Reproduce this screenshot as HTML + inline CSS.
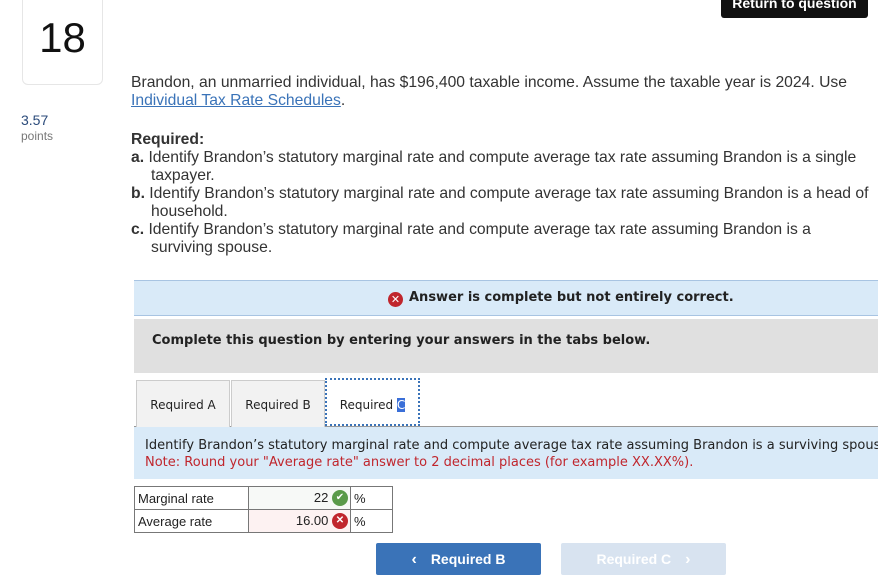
<!DOCTYPE html>
<html><head><meta charset="utf-8"><style>
body{margin:0;width:889px;height:579px;overflow:hidden;background:#fff;font-family:"Liberation Sans",sans-serif;color:#333;position:relative}
.a{position:absolute}
.v{font-family:"DejaVu Sans",Verdana,sans-serif}
td{vertical-align:middle;padding:0}
</style></head><body>
<div class="a" style="left:22px;top:-6px;width:79px;height:89px;border:1px solid #e6e6e6;border-radius:6px"></div>
<div class="a" style="left:22px;top:14px;width:81px;text-align:center;font-size:42px;color:#111">18</div>
<div class="a" style="left:721px;top:-8px;width:147px;height:26px;background:#111;border-radius:3px;color:#fff;font-weight:bold;font-size:14px;text-align:center;line-height:22px">Return to question</div>
<div class="a" style="left:21px;top:112px;font-size:14px;color:#2a4a7a">3.57</div>
<div class="a" style="left:21px;top:129px;font-size:12px;color:#777">points</div>
<div class="a" style="left:131px;top:74px;width:750px;font-size:15.7px;line-height:18px;color:#333">Brandon, an unmarried individual, has $196,400 taxable income. Assume the taxable year is 2024. Use<br><span style="color:#3a73b8;text-decoration:underline">Individual Tax Rate Schedules</span>.</div>
<div class="a" style="left:131px;top:131px;width:745px;font-size:15.7px;line-height:18px;color:#333">
<b>Required:</b><br>
<div style="padding-left:20px;text-indent:-20px"><b>a.</b> Identify Brandon’s statutory marginal rate and compute average tax rate assuming Brandon is a single taxpayer.</div>
<div style="padding-left:20px;text-indent:-20px"><b>b.</b> Identify Brandon’s statutory marginal rate and compute average tax rate assuming Brandon is a head of household.</div>
<div style="padding-left:20px;text-indent:-20px"><b>c.</b> Identify Brandon’s statutory marginal rate and compute average tax rate assuming Brandon is a surviving spouse.</div>
</div>
<div class="a" style="left:134px;top:280px;width:744px;height:34px;background:#d9eaf8;border-top:1px solid #a8c4e2;border-bottom:1px solid #a8c4e2"></div>
<div class="a v" style="left:388px;top:290px;font-size:13px;font-weight:bold;color:#222;white-space:nowrap"><span style="display:inline-block;width:15px;height:15px;border-radius:50%;background:#c0262d;color:#fff;font-size:11px;line-height:15px;text-align:center;vertical-align:-2px;margin-right:6px">✕</span>Answer is complete but not entirely correct.</div>
<div class="a" style="left:134px;top:319px;width:744px;height:54px;background:#e0e0e0"></div>
<div class="a v" style="left:152px;top:333px;font-size:13px;font-weight:bold;color:#222">Complete this question by entering your answers in the tabs below.</div>
<div class="a" style="left:134px;top:426px;width:744px;border-top:1px solid #999"></div>
<div class="a" style="left:136px;top:380px;width:92px;height:46px;background:#f2f2f2;border:1px solid #ccc;border-bottom:none;font-size:12px;color:#222;text-align:center;line-height:48px"><span class="v">Required A</span></div>
<div class="a" style="left:231px;top:380px;width:92px;height:46px;background:#f2f2f2;border:1px solid #ccc;border-bottom:none;font-size:12px;color:#222;text-align:center;line-height:48px"><span class="v">Required B</span></div>
<div class="a" style="left:325px;top:378px;width:95px;height:48px;background:#fff;border:2px dotted #3a73b8;font-size:12px;color:#222;text-align:center;line-height:50px;box-sizing:border-box"><span class="v">Required <span style="background:#3a6fd8;color:#fff">C</span></span></div>
<div class="a" style="left:134px;top:427px;width:744px;height:52px;background:#d9eaf8"></div>
<div class="a v" style="left:145px;top:437px;width:733px;overflow:hidden;white-space:nowrap;font-size:13px;line-height:17px;color:#222">Identify Brandon’s statutory marginal rate and compute average tax rate assuming Brandon is a surviving spouse.<br><span style="color:#c0262d">Note: Round your "Average rate" answer to 2 decimal places (for example XX.XX%).</span></div>
<table class="a" style="left:134px;top:486px;border-collapse:collapse;font-size:13px;color:#222;table-layout:fixed;width:258px">
<colgroup><col style="width:114px"><col style="width:102px"><col style="width:42px"></colgroup>
<tr style="height:23px"><td style="border:1px solid #777;padding-left:3px">Marginal rate</td><td style="border:1px solid #777;background:#f7f9f7;text-align:right;padding-right:2px">22 <span style="display:inline-block;width:16px;height:16px;border-radius:50%;background:#5a9a4a;color:#fff;font-size:10px;line-height:16px;text-align:center;vertical-align:middle">✔</span></td><td style="border:1px solid #777;padding-left:3px">%</td></tr>
<tr style="height:23px"><td style="border:1px solid #777;padding-left:3px">Average rate</td><td style="border:1px solid #777;background:#fdf2f2;text-align:right;padding-right:2px">16.00 <span style="display:inline-block;width:16px;height:16px;border-radius:50%;background:#c0262d;color:#fff;font-size:10px;line-height:16px;text-align:center;vertical-align:middle;font-weight:bold">✕</span></td><td style="border:1px solid #777;padding-left:3px">%</td></tr>
</table>
<div class="a" style="left:376px;top:543px;width:165px;height:32px;background:#3a73b8;border-radius:2px;color:#fff;font-weight:bold;font-size:14px;line-height:32px;text-align:center"><span style="margin-right:14px;font-size:16px">‹</span>Required B</div>
<div class="a" style="left:561px;top:543px;width:165px;height:32px;background:#d8e3f0;border-radius:2px;color:#fff;font-weight:bold;font-size:14px;line-height:32px;text-align:center">Required C<span style="margin-left:14px;font-size:16px">›</span></div>
</body></html>
